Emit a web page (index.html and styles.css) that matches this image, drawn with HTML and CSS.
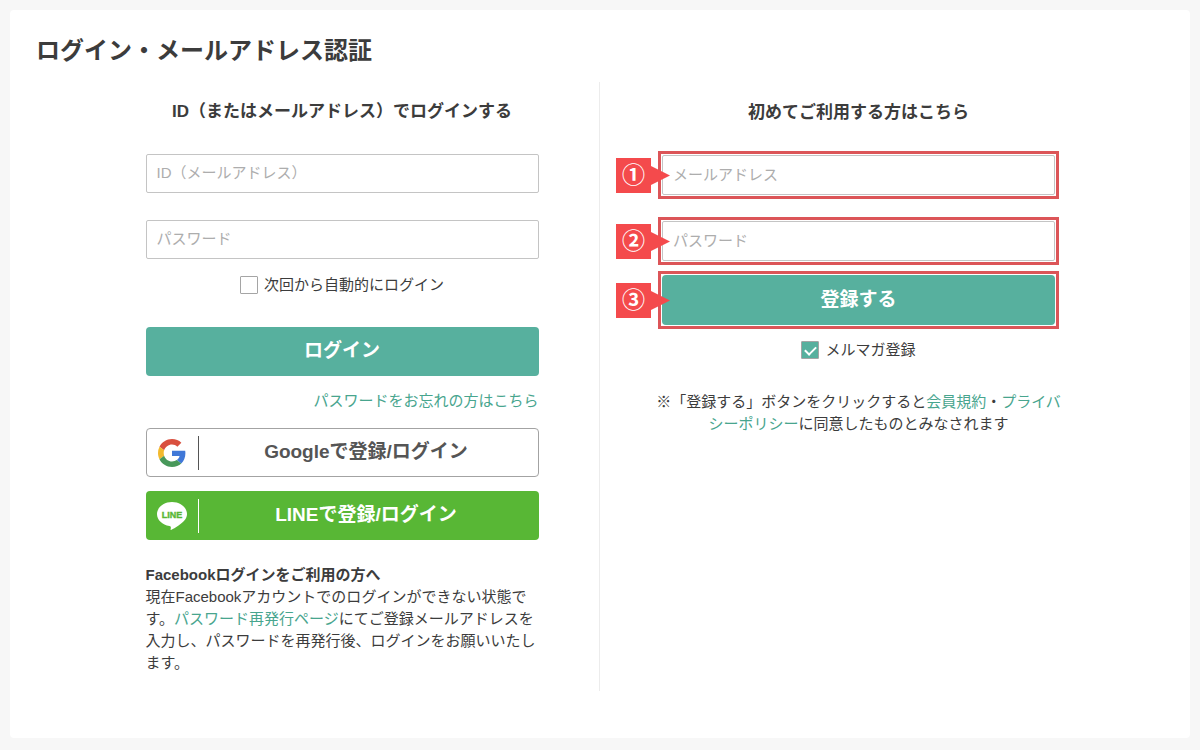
FILE: index.html
```html
<!DOCTYPE html>
<html lang="ja">
<head>
<meta charset="utf-8">
<meta name="viewport" content="width=device-width, initial-scale=1">
<title>ログイン・メールアドレス認証</title>
<link rel="stylesheet" href="styles.css">
</head>
<body>
<main class="card">
  <h1 class="page-title">ログイン・メールアドレス認証</h1>
  <div class="columns">
    <section class="column column-login">
      <form class="form">
        <h2 class="column-title">ID（またはメールアドレス）でログインする</h2>
        <div class="fields">
          <input class="text-input" type="text" placeholder="ID（メールアドレス）" aria-label="ID（メールアドレス）">
          <input class="text-input" type="password" placeholder="パスワード" aria-label="パスワード">
        </div>
        <label class="check check-login"><input class="checkbox" type="checkbox"><span>次回から自動的にログイン</span></label>
        <button class="button button-primary" type="submit">ログイン</button>
        <p class="forgot"><a class="link" href="#">パスワードをお忘れの方はこちら</a></p>
        <div class="social">
          <button class="button button-social button-google" type="button">
            <svg class="social-icon" viewBox="0 0 48 48" aria-hidden="true">
              <path fill="#d9503f" d="M24 9.500c3.540 0 6.710 1.220 9.210 3.600l6.850-6.850C35.900 2.380 30.470 0 24 0 14.620 0 6.510 5.380 2.560 13.220l7.980 6.190C12.430 13.720 17.740 9.500 24 9.500z"/>
              <path fill="#4078d8" d="M46.980 24.550c0-1.570-.15-3.090-.38-4.550H24v9.020h12.940c-.58 2.960-2.260 5.480-4.780 7.180l7.730 6c4.510-4.180 7.090-10.360 7.090-17.650z"/>
              <path fill="#f2b92e" d="M10.530 28.590A14.500 14.500 0 0 1 9.770 24c0-1.600.27-3.140.76-4.590l-7.980-6.190A23.900 23.900 0 0 0 0 24c0 3.880.92 7.540 2.560 10.780z"/>
              <path fill="#48985a" d="M24 48c6.480 0 11.930-2.130 15.890-5.810l-7.730-6c-2.150 1.450-4.920 2.300-8.160 2.300-6.260 0-11.570-4.220-13.470-9.910l-7.980 6.190C6.510 42.620 14.620 48 24 48z"/>
            </svg>
            <span class="social-label">Googleで登録/ログイン</span>
          </button>
          <button class="button button-social button-line" type="button">
            <svg class="social-icon" viewBox="0 0 30 28" aria-hidden="true">
              <path fill="#fff" d="M15 0C6.700 0 0 5.400 0 12.100c0 6 5.300 11 12.500 11.900 1.300.200 1.500.900 1.300 2.200l-.2 1.200c0 .500.300.700.900.400C17.500 26.400 25 21.700 28 17.800c1.300-1.600 2-3.500 2-5.700C30 5.400 23.300 0 15 0z"/>
              <text class="line-icon-text" x="15" y="16" text-anchor="middle">LINE</text>
            </svg>
            <span class="social-label">LINEで登録/ログイン</span>
          </button>
        </div>
        <div class="notice">
          <h3 class="notice-title">Facebookログインをご利用の方へ</h3>
          <p class="notice-text">現在Facebookアカウントでのログインができない状態です。<a class="link" href="#">パスワード再発行ページ</a>にてご登録メールアドレスを入力し、パスワードを再発行後、ログインをお願いいたします。</p>
        </div>
      </form>
    </section>
    <section class="column column-register">
      <form class="form">
        <h2 class="column-title">初めてご利用する方はこちら</h2>
        <div class="fields">
          <div class="marked">
            <span class="marker">①</span>
            <input class="text-input" type="email" placeholder="メールアドレス" aria-label="メールアドレス">
          </div>
          <div class="marked">
            <span class="marker">②</span>
            <input class="text-input" type="password" placeholder="パスワード" aria-label="パスワード">
          </div>
        </div>
        <div class="marked marked-submit">
          <span class="marker">③</span>
          <button class="button button-primary" type="submit">登録する</button>
        </div>
        <label class="check check-register"><input class="checkbox" type="checkbox" checked><span>メルマガ登録</span></label>
        <p class="terms">※「登録する」ボタンをクリックすると<a class="link" href="#">会員規約</a>・<a class="link" href="#">プライバシーポリシー</a>に同意したものとみなされます</p>
      </form>
    </section>
  </div>
</main>
</body>
</html>
```
FILE: styles.css
```css
* {
  box-sizing: border-box;
}

body {
  margin: 0;
  padding: 10px;
  background: #f7f7f7;
  color: #3c3c3c;
  font-family: "Liberation Sans", "Noto Sans CJK JP", sans-serif;
  font-size: 15px;
  line-height: 22px;
}

h1, h2, h3, p {
  margin: 0;
}

.card {
  padding: 25px 26px 47px;
  border-radius: 4px;
  background: #fff;
}

.page-title {
  font-size: 24px;
  line-height: 32px;
}

.columns {
  display: flex;
  max-width: 1034px;
  margin: 15px auto 0;
}

.column {
  flex: 1 1 50%;
  display: flex;
  justify-content: center;
  padding-bottom: 17px;
}

.column-login {
  padding-top: 18px;
  padding-left: 2px;
  border-right: 1px solid #ececec;
}

.column-register {
  padding-top: 19px;
}

.form {
  width: 393px;
  max-width: 100%;
}

.column-title {
  font-size: 17px;
  line-height: 24px;
  text-align: center;
}

.fields {
  display: grid;
  gap: 27px;
  margin-top: 30px;
}

.text-input {
  display: block;
  width: 100%;
  height: 39px;
  padding: 0 10px 2px;
  border: 1px solid #c4c4c4;
  border-radius: 2px;
  background: #fff;
  color: inherit;
  font: inherit;
}

.text-input::placeholder {
  color: #adadad;
  opacity: 1;
}

.check {
  display: flex;
  align-items: center;
  justify-content: center;
  gap: 6px;
}

.check-login {
  margin-top: 15px;
}

.checkbox {
  appearance: none;
  display: grid;
  place-items: center;
  width: 18px;
  height: 18px;
  margin: 0;
  border: 1px solid #a5a5a5;
  border-radius: 1px;
  background: #fff;
}

.checkbox:checked {
  background: #57b09e;
}

.checkbox:checked::before {
  content: "";
  width: 9px;
  height: 5px;
  border: solid #fff;
  border-width: 0 0 2px 2px;
  transform: translateY(-1px) rotate(-45deg);
}

.button {
  display: block;
  width: 100%;
  height: 49px;
  padding: 0 0 1px;
  border: 0;
  border-radius: 4px;
  font: inherit;
  font-size: 19px;
  font-weight: bold;
  line-height: 24px;
}

.button-primary {
  background: #57b09e;
  color: #fff;
}

.check + .button-primary {
  margin-top: 31px;
}

.link {
  color: #48a58e;
  text-decoration: none;
}

.forgot {
  margin-top: 14px;
  text-align: right;
}

.social {
  display: grid;
  gap: 14px;
  margin-top: 16px;
}

.button-social {
  display: flex;
  align-items: center;
  padding: 0 4px 0 11px;
  border: 1px solid transparent;
}

.button-google {
  border-color: #a3a3a3;
  background: #fff;
  color: #555;
}

.button-line {
  background: #58b735;
  color: #fff;
}

.social-icon {
  flex: none;
  width: 28px;
  height: 28px;
}

.button-line .social-icon {
  width: 30px;
  margin-left: -1px;
}

.line-icon-text {
  fill: #58b735;
  stroke: #58b735;
  stroke-width: 0.4px;
  font-family: "Liberation Sans", sans-serif;
  font-size: 9px;
  font-weight: bold;
}

.social-label {
  flex: 1;
  margin-left: 12px;
  padding: 4px 0 6px;
  border-left: 1px solid currentColor;
}

.button-line .social-label {
  margin-left: 11px;
}

.notice {
  margin-top: 24px;
}

.notice-title {
  font-size: 15px;
  line-height: 22px;
}

/* Numbered step: framed control with an arrow-shaped marker */
.marked {
  position: relative;
  outline: 3px solid #dc5558;
  outline-offset: 1px;
}

.column-register .text-input {
  height: 40px;
}

.column-register .fields {
  gap: 26px;
}

.marked-submit {
  margin-top: 14px;
}

.marked .button {
  height: 50px;
}

.marker {
  position: absolute;
  left: -46px;
  top: calc(50% - 17px);
  z-index: 1;
  width: 35px;
  height: 35px;
  background: #f44a4c;
  color: #fff;
  font-size: 23px;
  font-weight: bold;
  line-height: 35px;
  text-align: center;
}

.marker::after {
  content: "";
  position: absolute;
  left: 100%;
  top: 8px;
  width: 19px;
  height: 19px;
  background: #f44a4c;
  clip-path: polygon(0 0, 100% 50%, 0 100%);
}

.check-register {
  margin-top: 14px;
}

.terms {
  margin: 30px -8px 0;
  text-align: center;
}
```
